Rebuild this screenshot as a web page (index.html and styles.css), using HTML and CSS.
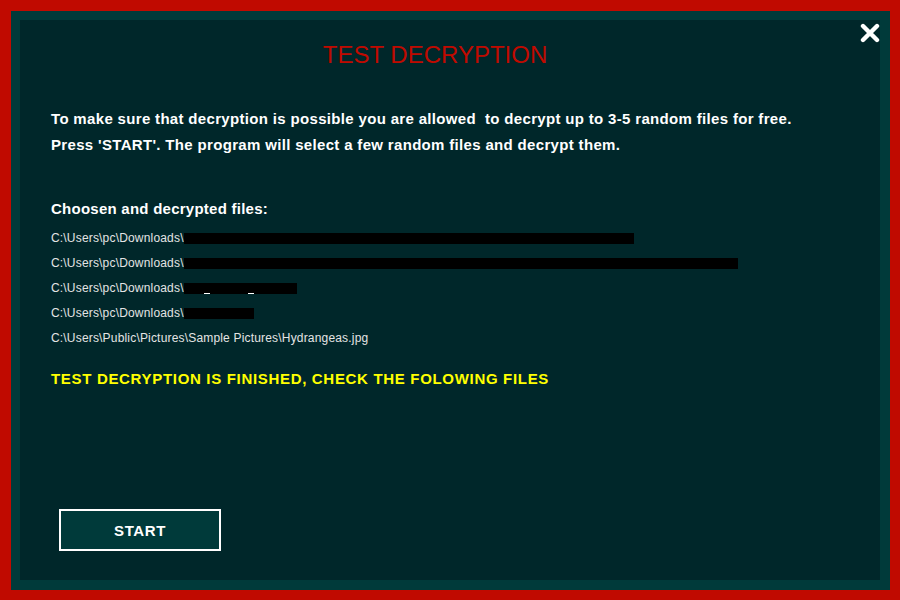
FILE: index.html
```html
<!DOCTYPE html>
<html>
<head>
<meta charset="utf-8">
<link rel="stylesheet" href="styles.css">
</head>
<body>
<div class="frame">
  <div class="window">
    <div class="panel">
      <svg class="close" width="20" height="20" viewBox="0 0 20 20">
        <path d="M3 3 L17 17 M17 3 L3 17" stroke="#ffffff" stroke-width="4.4" stroke-linecap="round" fill="none"/>
      </svg>
      <h1 class="title">TEST DECRYPTION</h1>
      <p class="intro">To make sure that decryption is possible you are allowed&nbsp; to decrypt up to 3-5 random files for free.<br>Press 'START'. The program will select a few random files and decrypt them.</p>
      <h2 class="subhead">Choosen and decrypted files:</h2>
      <ul class="files">
        <li>C:\Users\pc\Downloads\<span class="mask" style="width:450px"></span></li>
        <li>C:\Users\pc\Downloads\<span class="mask" style="width:554px"></span></li>
        <li>C:\Users\pc\Downloads\<span class="mask" style="width:113px"><span class="us us1"></span><span class="us us2"></span></span></li>
        <li>C:\Users\pc\Downloads\<span class="mask" style="width:70px"></span></li>
        <li>C:\Users\Public\Pictures\Sample Pictures\Hydrangeas.jpg</li>
      </ul>
      <p class="status">TEST DECRYPTION IS FINISHED, CHECK THE FOLOWING FILES</p>
      <button class="start">START</button>
    </div>
  </div>
</div>
</body>
</html>
```
FILE: styles.css
```css
html, body {
  margin: 0;
  padding: 0;
}
body {
  width: 900px;
  height: 600px;
  font-family: "Liberation Sans", Arial, sans-serif;
}
.frame {
  box-sizing: border-box;
  width: 900px;
  height: 600px;
  background: #c00a00;
  padding: 11px 10px 10px 11px;
}
.window {
  box-sizing: border-box;
  height: 100%;
  background: #003a3a;
  padding: 9px 10px 10px 9px;
}
.panel {
  position: relative;
  box-sizing: border-box;
  height: 100%;
  background: #00272a;
  padding: 20px 30px 29px 31px;
  display: flex;
  flex-direction: column;
  align-items: flex-start;
}
.close {
  position: absolute;
  top: 3px;
  right: 0;
}
.title {
  align-self: stretch;
  margin: 0 0 0 -31px;
  text-align: center;
  font-size: 24px;
  line-height: 30px;
  font-weight: normal;
  color: #c00a00;
}
.intro {
  margin: 36px 0 0;
  font-size: 15px;
  line-height: 26px;
  font-weight: bold;
  letter-spacing: 0.33px;
  color: #ffffff;
}
.subhead {
  margin: 38px 0 0;
  font-size: 15px;
  line-height: 26px;
  font-weight: bold;
  letter-spacing: 0.25px;
  color: #ffffff;
}
.files {
  list-style: none;
  margin: 4px 0 0;
  padding: 0;
  font-size: 12px;
  line-height: 25px;
  letter-spacing: 0.18px;
  color: #e4e4e4;
}
.files li {
  white-space: nowrap;
}
.mask {
  position: relative;
  display: inline-block;
  height: 11px;
  background: #000000;
  vertical-align: -2px;
}
.us {
  position: absolute;
  bottom: 0;
  height: 1px;
  width: 6px;
  background: #ffffff;
}
.us1 { left: 20px; }
.us2 { left: 64px; }
.status {
  margin: 15px 0 0;
  font-size: 15px;
  line-height: 26px;
  font-weight: bold;
  letter-spacing: 0.68px;
  color: #ffff00;
}
.start {
  margin: auto 0 0 8px;
  box-sizing: border-box;
  width: 162px;
  height: 42px;
  background: #003a3a;
  border: 2px solid #ffffff;
  color: #ffffff;
  font-family: "Liberation Sans", Arial, sans-serif;
  font-size: 15px;
  font-weight: bold;
  letter-spacing: 0.6px;
  padding: 0;
}
```
